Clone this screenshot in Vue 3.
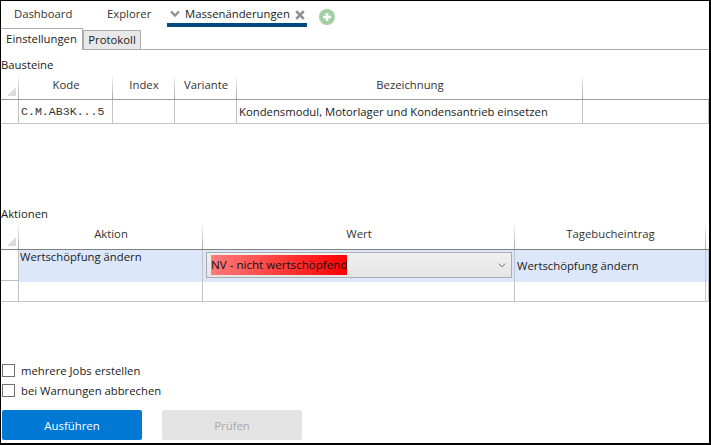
<template>
  <div class="window">
    <nav class="top-nav">
      <a class="top-link first">Dashboard</a>
      <a class="top-link second">Explorer</a>
      <div class="top-active">
        <svg class="chev" width="10" height="8" viewBox="0 0 10 8">
          <path d="M1 1.5 L5 5.5 L9 1.5" fill="none" stroke="#8f8f8f" stroke-width="2.4" />
        </svg>
        <span class="top-active-label">Massenänderungen</span>
        <svg class="close" width="10" height="10" viewBox="0 0 10 10">
          <path d="M1.2 1.2 L8.8 8.8 M8.8 1.2 L1.2 8.8" fill="none" stroke="#8f8f8f" stroke-width="2.6" />
        </svg>
      </div>
      <svg class="add" width="16" height="16" viewBox="0 0 16 16">
        <circle cx="8" cy="8" r="8" fill="#a3d0a3" />
        <path d="M8 4 V12 M4 8 H12" stroke="#fff" stroke-width="2.6" />
      </svg>
    </nav>

    <div class="sub-tabs">
      <button type="button" class="sub-tab active">Einstellungen</button>
      <button type="button" class="sub-tab">Protokoll</button>
    </div>

    <section class="section-parts">
      <div class="section-label">Bausteine</div>
      <div class="grid grid-parts grid-head">
        <div class="cell corner"><span class="corner-mark" /></div>
        <div v-for="col in partColumns" :key="col" class="cell head">{{ col }}</div>
        <div class="cell head" />
      </div>
      <div class="grid grid-parts row-parts">
        <div class="cell" />
        <div class="cell mono">C.M.AB3K...5</div>
        <div class="cell" />
        <div class="cell" />
        <div class="cell text">Kondensmodul, Motorlager und Kondensantrieb einsetzen</div>
        <div class="cell" />
      </div>
    </section>

    <section class="section-actions">
      <div class="section-label">Aktionen</div>
      <div class="grid grid-actions grid-head head-actions">
        <div class="cell corner"><span class="corner-mark" /></div>
        <div v-for="col in actionColumns" :key="col" class="cell head">{{ col }}</div>
        <div class="cell head" />
      </div>
      <div class="grid grid-actions row-selected">
        <div class="cell blank" />
        <div class="cell text top">Wertschöpfung ändern</div>
        <div class="cell select-cell">
          <div class="select">
            <span class="select-value">NV - nicht wertschöpfend</span>
            <svg class="select-arrow" width="8" height="5" viewBox="0 0 8 5">
              <path d="M0.8 0.6 L4 3.8 L7.2 0.6" fill="none" stroke="#666" stroke-width="1" />
            </svg>
          </div>
        </div>
        <div class="cell text middle">Wertschöpfung ändern</div>
        <div class="cell" />
      </div>
      <div class="grid grid-actions row-empty">
        <div class="cell" />
        <div class="cell" />
        <div class="cell" />
        <div class="cell" />
        <div class="cell" />
      </div>
    </section>

    <div class="options">
      <label v-for="opt in options" :key="opt" class="option">
        <span class="checkbox" />
        <span>{{ opt }}</span>
      </label>
    </div>

    <div class="buttons">
      <button type="button" class="btn primary">Ausführen</button>
      <button type="button" class="btn disabled">Prüfen</button>
    </div>
  </div>
</template>

<script setup>
const partColumns = ['Kode', 'Index', 'Variante', 'Bezeichnung']
const actionColumns = ['Aktion', 'Wert', 'Tagebucheintrag']
const options = ['mehrere Jobs erstellen', 'bei Warnungen abbrechen']
</script>

<style>
html,
body {
  margin: 0;
  background: #fff;
}
</style>

<style scoped>
.window {
  box-sizing: border-box;
  width: 711px;
  height: 445px;
  border-top: 1px solid #000;
  border-left: 1px solid #000;
  border-right: 2px solid #000;
  border-bottom: 2px solid #000;
  background: #fff;
  color: #1a1a1a;
  font-family: "Open Sans", "Noto Sans", sans-serif;
  font-size: 11.3px;
  overflow: hidden;
}

.top-nav {
  display: flex;
  height: 26px;
  align-items: flex-start;
}

.top-link {
  padding-top: 5px;
  color: #333;
}

.first {
  margin-left: 13px;
  width: 93px;
}

.second {
  width: 60px;
}

.top-active {
  display: flex;
  align-items: flex-start;
  box-sizing: border-box;
  width: 140px;
  height: 26px;
  padding-top: 5px;
  border-bottom: 4px solid #004a7f;
}

.chev {
  margin: 4px 0 0 3px;
}

.top-active-label {
  margin-left: 5px;
}

.close {
  margin: 4px 0 0 5px;
}

.add {
  margin: 8px 0 0 12px;
}

.sub-tabs {
  display: flex;
  align-items: flex-end;
  height: 22px;
  border-bottom: 1px solid #acacac;
}

.sub-tab {
  box-sizing: border-box;
  padding: 0 0 2px;
  font: inherit;
  color: #1a1a1a;
  border: 1px solid #acacac;
  border-bottom: none;
  background: #e8e8e8;
  height: 19px;
  width: 58px;
  margin-left: 0;
}

.sub-tab.active {
  background: #fff;
  width: 82px;
  height: 22px;
  margin-bottom: -1px;
  border-left: none;
  position: relative;
}

.section-parts {
  margin-top: 7px;
}

.section-label {
  height: 16px;
  line-height: 16px;
}

.grid {
  display: grid;
  width: 100%;
}

.grid-parts {
  grid-template-columns: 18px 94px 62px 62px 346px 1fr;
}

.grid-actions {
  grid-template-columns: 18px 184px 312px 191px 1fr;
}

.grid-head {
  height: 26px;
  border-bottom: 1px solid #9a9a9a;
}

.grid-head .head {
  padding-bottom: 3px;
}

.head-actions {
  height: 27px;
  border-bottom-color: #808080;
}

.head-actions .head {
  padding-bottom: 5px;
}

.cell {
  box-sizing: border-box;
  min-width: 0;
  border-right: 1px solid #c4c4c4;
}

.grid-head .cell {
  border-right: none;
  background: linear-gradient(to bottom, #ffffff, #a8a8a8) right bottom / 1px 100% no-repeat;
}

.grid-head .cell:last-child {
  background: none;
}

.head {
  display: flex;
  align-items: center;
  justify-content: center;
  color: #333;
}

.corner {
  position: relative;
}

.corner-mark {
  position: absolute;
  right: 3px;
  bottom: 3px;
  width: 0;
  height: 0;
  border-left: 9px solid transparent;
  border-bottom: 9px solid #dcdcdc;
}

.row-parts {
  height: 23px;
  border-bottom: 1px solid #c4c4c4;
  line-height: 23px;
}

.mono {
  padding-left: 2px;
  font-family: "Liberation Mono", monospace;
  font-size: 11.6px;
  color: #333;
}

.text {
  padding-left: 2px;
  white-space: nowrap;
}

.section-actions {
  margin-top: 82px;
}

.row-selected {
  height: 30px;
  border-bottom: 1px solid #b9bfca;
}

.row-selected .cell:not(.blank) {
  background: #dce8fa;
  border-right-color: #c0c6d0;
}

.row-selected .cell:last-child {
  background: #dce8fa;
}

.top {
  padding-left: 1px;
  line-height: 14px;
}

.middle {
  line-height: 32px;
}

.select-cell {
  padding: 2px 2px 2px 3px;
}

.select {
  box-sizing: border-box;
  display: flex;
  align-items: center;
  justify-content: space-between;
  height: 26px;
  padding: 0 5px 0 4px;
  border: 1px solid #acacac;
  background: linear-gradient(to bottom, #f0f0f0, #e5e5e5);
}

.select-value {
  display: block;
  height: 20px;
  line-height: 20px;
  font-size: 11.6px;
  color: #111;
  background: linear-gradient(to right, #ff7b7b, #ff0000);
  white-space: nowrap;
}

.row-empty {
  height: 20px;
  border-bottom: 1px solid #c4c4c4;
}

.options {
  display: flex;
  flex-direction: column;
  gap: 7px;
  margin-top: 62px;
}

.option {
  display: flex;
  align-items: center;
  gap: 6px;
  margin-left: 1px;
  height: 13px;
  color: #222;
}

.checkbox {
  box-sizing: border-box;
  width: 13px;
  height: 13px;
  border: 1px solid #707070;
  background: #fff;
}

.buttons {
  display: flex;
  gap: 20px;
  margin: 13px 0 0 1px;
}

.btn {
  width: 140px;
  height: 30px;
  padding: 0;
  border: none;
  border-radius: 2px;
  font: inherit;
  font-size: 11.4px;
}

.primary {
  background: #0078d4;
  color: #fff;
}

.disabled {
  background: #e3e3e3;
  color: #a8a8a8;
}
</style>
